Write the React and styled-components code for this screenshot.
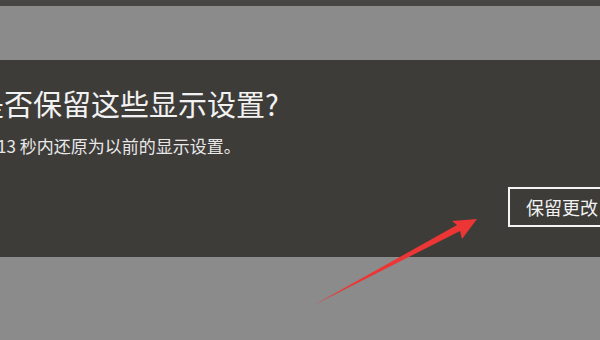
import React from 'react';
import styled, { createGlobalStyle } from 'styled-components';

const GlobalStyle = createGlobalStyle`
  html, body {
    margin: 0;
    padding: 0;
    background: #8b8b8b;
    font-family: "Noto Sans CJK SC", "Noto Sans", sans-serif;
  }
`;

const Screen = styled.div`
  position: relative;
  width: 600px;
  height: 340px;
  overflow: hidden;
  background: #8b8b8b;
`;

const TopBar = styled.div`
  height: 6px;
  background: #474645;
`;

const Gap = styled.div`
  height: 54px;
`;

const Dialog = styled.div`
  height: 197px;
  background: #3e3c39;
  overflow: hidden;
  display: flex;
  flex-direction: column;
  padding-top: 25px;
  box-sizing: border-box;
`;

const Title = styled.h1`
  margin: 0 0 0 -25px;
  font-size: 29px;
  line-height: 37px;
  font-weight: 400;
  color: #f2f2f2;
  white-space: nowrap;
`;

const Message = styled.p`
  margin: 12px 0 0 -3px;
  font-size: 17px;
  line-height: 24px;
  color: #e8e8e8;
  white-space: nowrap;
`;

const Actions = styled.div`
  display: flex;
  justify-content: flex-end;
  margin-top: 29px;
  margin-right: -40px;
`;

const KeepButton = styled.button`
  width: 132px;
  height: 40px;
  box-sizing: border-box;
  border: 2px solid #f4f4f4;
  background: #3e3c39;
  color: #f2f2f2;
  font-family: inherit;
  font-size: 18px;
  text-align: left;
  padding: 0 0 0 16px;
  white-space: nowrap;
`;

const Arrow = styled.svg`
  position: absolute;
  left: 0;
  top: 0;
  pointer-events: none;
`;

export default function App() {
  return (
    <Screen>
      <GlobalStyle />
      <TopBar />
      <Gap />
      <Dialog>
        <Title>是否保留这些显示设置?</Title>
        <Message>13 秒内还原为以前的显示设置。</Message>
        <Actions>
          <KeepButton>保留更改</KeepButton>
        </Actions>
      </Dialog>
      <Arrow width="600" height="340" viewBox="0 0 600 340">
        <path
          d="M314 305 L457 225 L452 221 L477 219 L462 239 L460 231 Z"
          fill="#ec3636"
        />
      </Arrow>
    </Screen>
  );
}
